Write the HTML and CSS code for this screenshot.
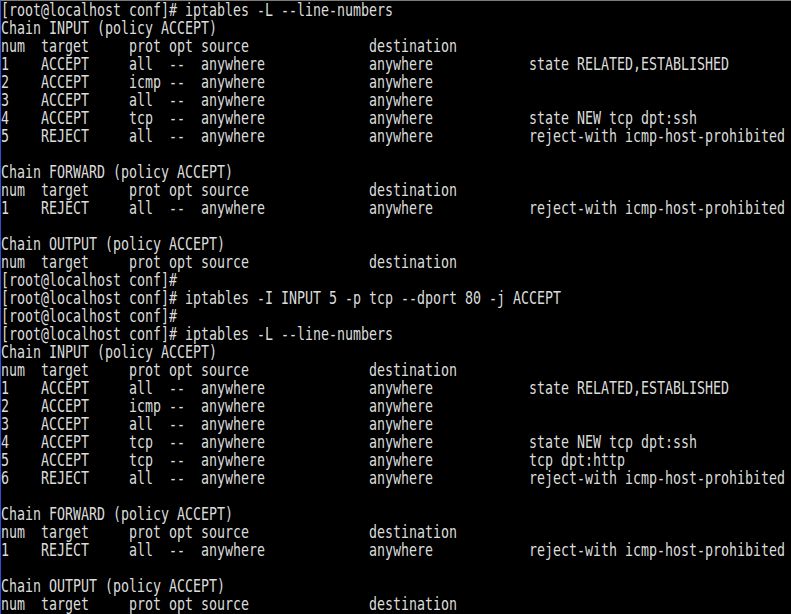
FILE: index.html
```html
<!DOCTYPE html>
<html>
<head>
<meta charset="utf-8">
<link rel="stylesheet" href="styles.css">
</head>
<body>
<div class="term">
<div class="screen"><div class="ln">[root@localhost conf]# iptables -L --line-numbers</div><div class="ln">Chain INPUT (policy ACCEPT)</div><div class="ln">num  target     prot opt source               destination</div><div class="ln">1    ACCEPT     all  --  anywhere             anywhere            state RELATED,ESTABLISHED</div><div class="ln">2    ACCEPT     icmp --  anywhere             anywhere</div><div class="ln">3    ACCEPT     all  --  anywhere             anywhere</div><div class="ln">4    ACCEPT     tcp  --  anywhere             anywhere            state NEW tcp dpt:ssh</div><div class="ln">5    REJECT     all  --  anywhere             anywhere            reject-with icmp-host-prohibited</div><div class="ln"> </div><div class="ln">Chain FORWARD (policy ACCEPT)</div><div class="ln">num  target     prot opt source               destination</div><div class="ln">1    REJECT     all  --  anywhere             anywhere            reject-with icmp-host-prohibited</div><div class="ln"> </div><div class="ln">Chain OUTPUT (policy ACCEPT)</div><div class="ln">num  target     prot opt source               destination</div><div class="ln">[root@localhost conf]#</div><div class="ln">[root@localhost conf]# iptables -I INPUT 5 -p tcp --dport 80 -j ACCEPT</div><div class="ln">[root@localhost conf]#</div><div class="ln">[root@localhost conf]# iptables -L --line-numbers</div><div class="ln">Chain INPUT (policy ACCEPT)</div><div class="ln">num  target     prot opt source               destination</div><div class="ln">1    ACCEPT     all  --  anywhere             anywhere            state RELATED,ESTABLISHED</div><div class="ln">2    ACCEPT     icmp --  anywhere             anywhere</div><div class="ln">3    ACCEPT     all  --  anywhere             anywhere</div><div class="ln">4    ACCEPT     tcp  --  anywhere             anywhere            state NEW tcp dpt:ssh</div><div class="ln">5    ACCEPT     tcp  --  anywhere             anywhere            tcp dpt:http</div><div class="ln">6    REJECT     all  --  anywhere             anywhere            reject-with icmp-host-prohibited</div><div class="ln"> </div><div class="ln">Chain FORWARD (policy ACCEPT)</div><div class="ln">num  target     prot opt source               destination</div><div class="ln">1    REJECT     all  --  anywhere             anywhere            reject-with icmp-host-prohibited</div><div class="ln"> </div><div class="ln">Chain OUTPUT (policy ACCEPT)</div><div class="ln">num  target     prot opt source               destination</div></div>
</div>
</body>
</html>
```

FILE: styles.css
```css
html, body {
  margin: 0;
  padding: 0;
  background: #000;
  overflow: hidden;
}
.term {
  width: 790px;
  height: 613px;
  background: #000;
  border-top: 1px solid #7a7a7a;
  border-left: 1px solid #2f4fd8;
  overflow: hidden;
}
.screen {
  font-family: "DejaVu Sans Mono", monospace;
  font-size: 18px;
  line-height: 18px;
  color: #dcdcdc;
  transform: scaleX(0.7383);
  transform-origin: 0 0;
  width: 1100px;
}
.ln {
  white-space: pre;
  height: 18px;
}
```
